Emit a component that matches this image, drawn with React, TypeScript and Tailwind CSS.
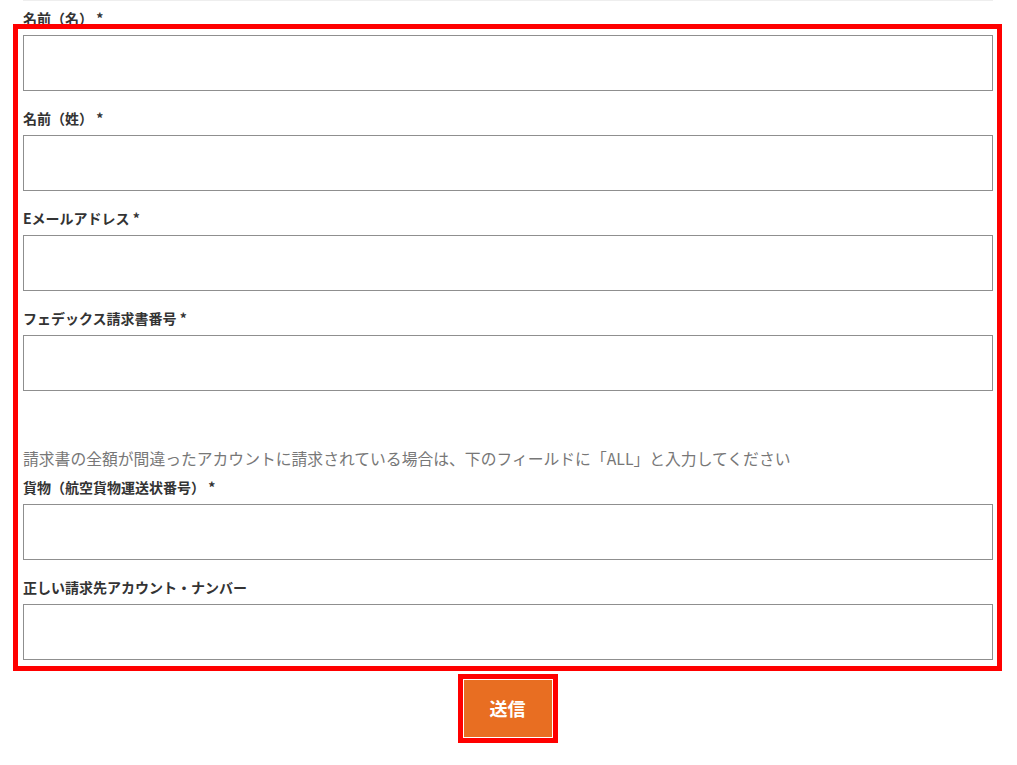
export default function App() {
  const fields = [
    { label: '名前（名）', required: true },
    { label: '名前（姓）', required: true },
    { label: 'Eメールアドレス', required: true },
    { label: 'フェデックス請求書番号', required: true },
  ];

  const lower = [
    { label: '貨物（航空貨物運送状番号）', required: true },
    { label: '正しい請求先アカウント・ナンバー', required: false },
  ];

  const renderField = (f: { label: string; required: boolean }, i: number, last: boolean) => (
    <div key={i} className={last ? '' : 'mb-[17px]'}>
      <label className="block h-5 leading-5 text-[14px] font-semibold text-[#333]">
        {f.label}
        {f.required && <span> *</span>}
      </label>
      <input type="text" className="mt-[7px] block w-[970px] h-[56px] border border-[#8f8f8f] bg-white outline-none" />
    </div>
  );

  return (
    <div
      className="relative w-[1017px] h-[765px] bg-white overflow-hidden"
      style={{ fontFamily: '"Noto Sans CJK JP", "Noto Sans", sans-serif' }}
    >
      <div className="ml-[23px] w-[970px] h-px bg-[#eeeeee]" />

      <form className="pl-[23px] pt-[7px]" onSubmit={(e) => e.preventDefault()}>
        {fields.map((f, i) => renderField(f, i, i === fields.length - 1))}

        <p className="mt-[56px] h-6 leading-6 text-[15.8px] text-[#777]">
          請求書の全額が間違ったアカウントに請求されている場合は、下のフィールドに「ALL」と入力してください
        </p>

        <div className="mt-[6px]">
          {lower.map((f, i) => renderField(f, i + 10, i === lower.length - 1))}
        </div>

        <div className="w-[970px] flex justify-center mt-[20px]">
          <button
            type="submit"
            className="ml-[-1px] w-[88px] h-[57px] bg-[#e86e22] text-white text-[18px] font-bold outline-[5px] outline-solid outline-[#ff0000] outline-offset-[1px]"
          >
            送信
          </button>
        </div>
      </form>

      {/* highlight overlay */}
      <div className="pointer-events-none absolute left-[13px] top-[24px] w-[989px] h-[647px] border-[5px] border-[#ff0000]" />
    </div>
  );
}
